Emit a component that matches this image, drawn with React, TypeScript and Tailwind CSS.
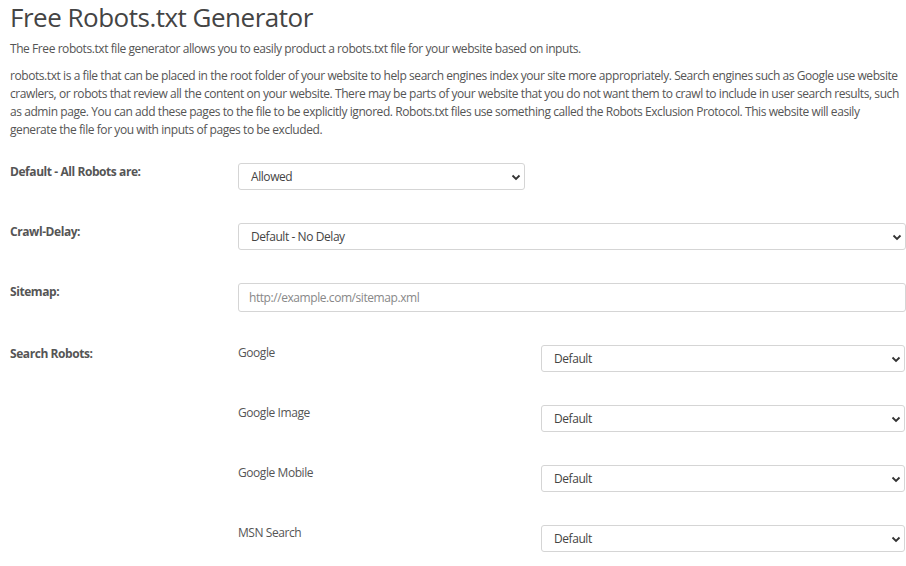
const Chev = () => (
  <svg width="10" height="10" viewBox="0 0 10 10" className="shrink-0"><path d="M1.5 3.5 L5 7 L8.5 3.5" fill="none" stroke="#333" strokeWidth="1.8" /></svg>
);

const Sel = ({ text, cls }: { text: string; cls: string }) => (
  <div className={`flex items-center justify-between h-[27px] border border-[#d5d5d5] rounded-[3px] bg-white pl-[12px] pr-[3px] text-[12px] text-[#444] ${cls}`}>
    <span>{text}</span>
    <Chev />
  </div>
);

export default function App() {
  const robots = ["Google", "Google Image", "Google Mobile", "MSN Search"];
  return (
    <div className="w-[906px] h-[566px] overflow-hidden bg-white pl-[10px] text-[#555] tracking-[-0.43px]" style={{ fontFamily: '"Open Sans", sans-serif' }}>
      <h1 className="text-[26px] leading-[32px] text-[#444] pt-[1px] tracking-[-0.5px]">Free Robots.txt Generator</h1>
      <p className="text-[12px] leading-[18px] mt-[7px]">The Free robots.txt file generator allows you to easily product a robots.txt file for your website based on inputs.</p>
      <p className="text-[12px] leading-[18px] mt-[9px] pr-[4px]">robots.txt is a file that can be placed in the root folder of your website to help search engines index your site more appropriately. Search engines such as Google use website crawlers, or robots that review all the content on your website. There may be parts of your website that you do not want them to crawl to include in user search results, such as admin page. You can add these pages to the file to be explicitly ignored. Robots.txt files use something called the Robots Exclusion Protocol. This website will easily generate the file for you with inputs of pages to be excluded.</p>
      <div className="flex mt-[24px] text-[12px]">
        <div className="w-[228px] font-bold pt-[0px]">Default - All Robots are:</div>
        <Sel text="Allowed" cls="w-[287px]" />
      </div>
      <div className="flex mt-[33px] text-[12px]">
        <div className="w-[228px] font-bold">Crawl-Delay:</div>
        <Sel text="Default - No Delay" cls="w-[668px]" />
      </div>
      <div className="flex mt-[33px] text-[12px]">
        <div className="w-[228px] font-bold">Sitemap:</div>
        <div className="w-[668px] h-[29px] border border-[#d5d5d5] rounded-[3px] flex items-center pl-[10px] text-[#888]">http://example.com/sitemap.xml</div>
      </div>
      <div className="flex mt-[32px] text-[12px]">
        <div className="w-[228px] font-bold pt-[1px]">Search Robots:</div>
        <div className="flex flex-col gap-[32px]">
          {robots.map((r) => (
            <div key={r} className="flex">
              <div className="w-[303px]">{r}</div>
              <Sel text="Default" cls="w-[364px] mt-[1px]" />
            </div>
          ))}
        </div>
      </div>
    </div>
  );
}
